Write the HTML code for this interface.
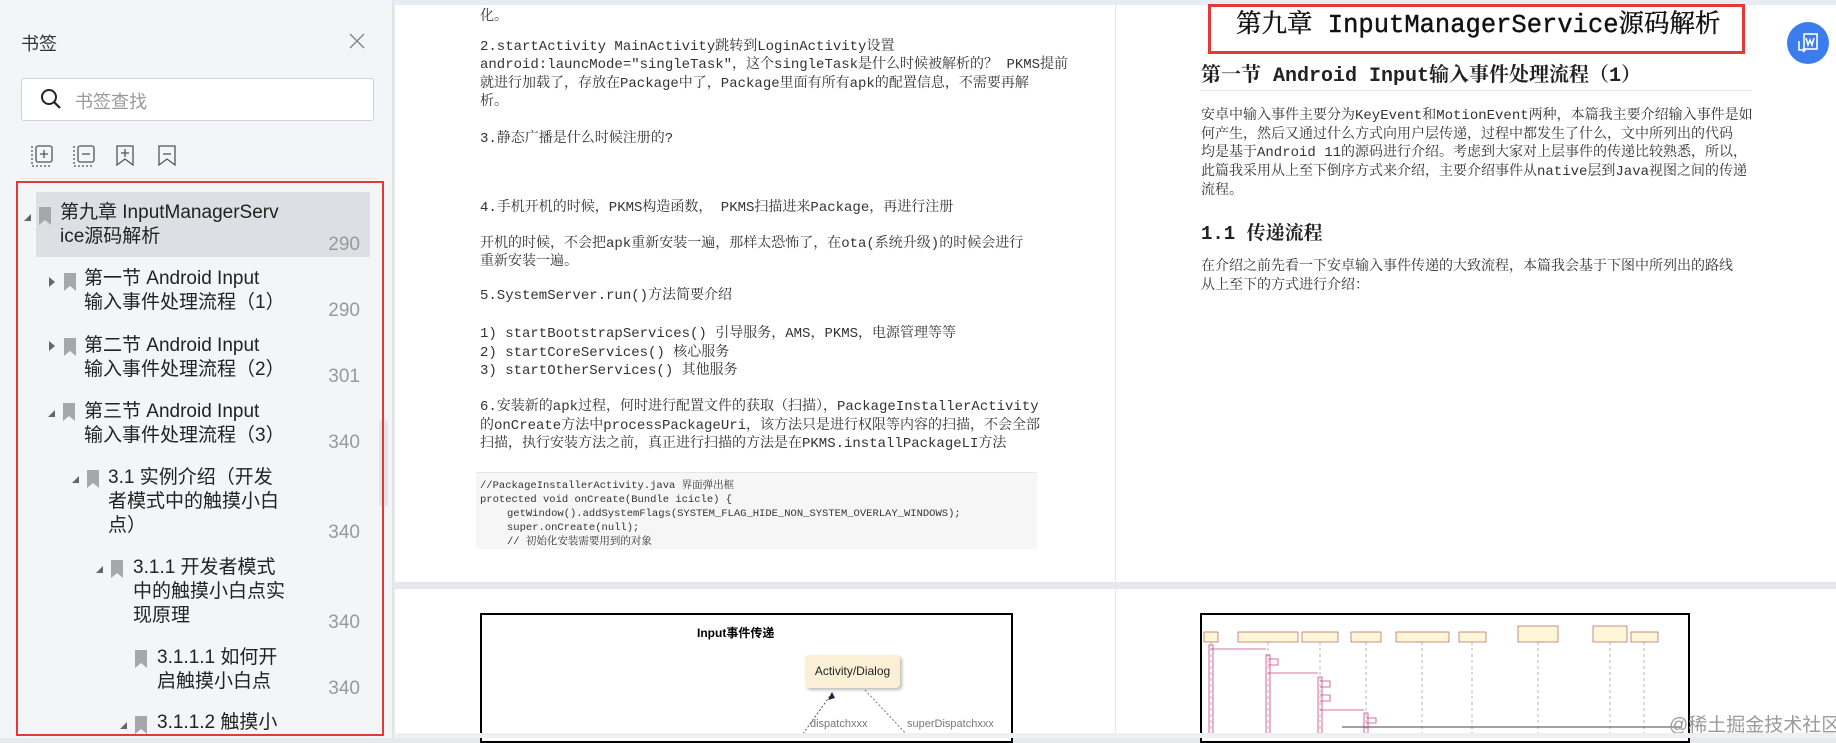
<!DOCTYPE html>
<html><head><meta charset="utf-8"><style>
*{margin:0;padding:0;box-sizing:border-box}
body{width:1836px;height:738px;overflow:hidden;background:#e6e8eb;font-family:"Liberation Sans","Noto Sans CJK SC",sans-serif;position:relative}
.a{position:absolute;white-space:nowrap}
#side{position:absolute;left:0;top:0;width:393px;height:738px;background:#f4f5f7;border-right:1px solid #e0e2e5}
.t{font-size:19px;color:#222;line-height:24px}
.n{font-size:19px;color:#999;width:60px;text-align:right;left:300px}
.ser{font-family:"Liberation Mono","Noto Serif CJK SC",serif;color:#333}
.p{font-size:14px;line-height:18px}
.tri{width:0;height:0;border-left:7px solid transparent;border-bottom:7px solid #666}
.rt{width:0;height:0;border-top:5px solid transparent;border-bottom:5px solid transparent;border-left:6px solid #666}
</style></head><body>
<div id="side">
 <div class="a" style="left:21px;top:30px;font-size:18px;color:#333">书签</div>
 <svg class="a" style="left:349px;top:33px" width="16" height="16"><path d="M1 1L15 15M15 1L1 15" stroke="#888" stroke-width="1.5"/></svg>
 <div class="a" style="left:21px;top:78px;width:353px;height:43px;background:#fff;border:1px solid #cfd2d6;border-radius:3px"></div>
 <svg class="a" style="left:40px;top:88px" width="22" height="22"><circle cx="9" cy="9" r="7" fill="none" stroke="#222" stroke-width="2"/><path d="M14 14L20 20" stroke="#222" stroke-width="2.2"/></svg>
 <div class="a" style="left:75px;top:88px;font-size:18px;color:#999">书签查找</div>
 <svg class="a" style="left:30px;top:144px" width="160" height="24" fill="none" stroke="#555" stroke-width="1.3">
  <path d="M2 2V22H22" stroke-dasharray="2 2"/><rect x="6" y="2" width="16" height="16" rx="2"/><path d="M10 10H18M14 6V14"/>
  <path d="M44 2V22H64" stroke-dasharray="2 2"/><rect x="48" y="2" width="16" height="16" rx="2"/><path d="M52 10H60"/>
  <path d="M87 2H103V21L95 15L87 21Z"/><path d="M91 9H99M95 5V13"/>
  <path d="M129 2H145V21L137 15L129 21Z"/><path d="M133 10H141"/>
 </svg>
 <div class="a" style="left:20px;top:178px;width:355px;height:1px;background:#e2e4e7"></div>
 <div class="a" style="left:36px;top:192px;width:334px;height:65px;background:#dcdfe3"></div>
 <div class="a" style="left:379px;top:420px;width:9px;height:87px;background:#e3e5e8;border-radius:4px"></div>
 <div class="a tri" style="left:24px;top:214px"></div>
 <svg class="a" style="left:39px;top:207px" width="13" height="19"><path d="M0 0H12V18L6 13L0 18Z" fill="#a4a8ad"/></svg>
 <div class="a t" style="left:60px;top:201px">第九章 InputManagerServ<br>ice源码解析</div>
 <div class="a n" style="top:234px">290</div>

 <div class="a rt" style="left:49px;top:277px"></div>
 <svg class="a" style="left:64px;top:273px" width="13" height="19"><path d="M0 0H12V18L6 13L0 18Z" fill="#a4a8ad"/></svg>
 <div class="a t" style="left:84px;top:267px">第一节 Android Input<br>输入事件处理流程（1）</div>
 <div class="a n" style="top:300px">290</div>

 <div class="a rt" style="left:49px;top:341px"></div>
 <svg class="a" style="left:64px;top:338px" width="13" height="19"><path d="M0 0H12V18L6 13L0 18Z" fill="#a4a8ad"/></svg>
 <div class="a t" style="left:84px;top:334px">第二节 Android Input<br>输入事件处理流程（2）</div>
 <div class="a n" style="top:366px">301</div>

 <div class="a tri" style="left:48px;top:410px"></div>
 <svg class="a" style="left:63px;top:403px" width="13" height="19"><path d="M0 0H12V18L6 13L0 18Z" fill="#a4a8ad"/></svg>
 <div class="a t" style="left:84px;top:400px">第三节 Android Input<br>输入事件处理流程（3）</div>
 <div class="a n" style="top:432px">340</div>

 <div class="a tri" style="left:72px;top:476px"></div>
 <svg class="a" style="left:87px;top:470px" width="13" height="19"><path d="M0 0H12V18L6 13L0 18Z" fill="#a4a8ad"/></svg>
 <div class="a t" style="left:108px;top:466px">3.1 实例介绍（开发<br>者模式中的触摸小白<br>点）</div>
 <div class="a n" style="top:522px">340</div>

 <div class="a tri" style="left:96px;top:566px"></div>
 <svg class="a" style="left:111px;top:560px" width="13" height="19"><path d="M0 0H12V18L6 13L0 18Z" fill="#a4a8ad"/></svg>
 <div class="a t" style="left:133px;top:556px">3.1.1 开发者模式<br>中的触摸小白点实<br>现原理</div>
 <div class="a n" style="top:612px">340</div>

 <svg class="a" style="left:135px;top:650px" width="13" height="19"><path d="M0 0H12V18L6 13L0 18Z" fill="#a4a8ad"/></svg>
 <div class="a t" style="left:157px;top:646px">3.1.1.1 如何开<br>启触摸小白点</div>
 <div class="a n" style="top:678px">340</div>

 <div class="a tri" style="left:120px;top:722px"></div>
 <svg class="a" style="left:135px;top:716px" width="13" height="19"><path d="M0 0H12V18L6 13L0 18Z" fill="#a4a8ad"/></svg>
 <div class="a t" style="left:157px;top:711px">3.1.1.2 触摸小</div>
 <div class="a" style="left:16px;top:181px;width:368px;height:555px;border:2px solid #e53935"></div>
</div>

<div class="a" style="left:394px;top:0;width:1442px;height:5px;background:#e8ecf4"></div>
<div class="a" style="left:395px;top:5px;width:720px;height:577px;background:#fff"></div>
<div class="a" style="left:1116px;top:5px;width:720px;height:577px;background:#fff"></div>
<div class="a" style="left:395px;top:589px;width:720px;height:144px;background:#fff"></div>
<div class="a" style="left:1116px;top:589px;width:720px;height:144px;background:#fff"></div>

<div class="ser p">
 <div class="a" style="left:480px;top:8px">化。</div>
 <div class="a" style="left:480px;top:38px">2.startActivity MainActivity跳转到LoginActivity设置</div>
 <div class="a" style="left:480px;top:56px">android:launcMode="singleTask"，这个singleTask是什么时候被解析的？ PKMS提前</div>
 <div class="a" style="left:480px;top:75px">就进行加载了，存放在Package中了，Package里面有所有apk的配置信息，不需要再解</div>
 <div class="a" style="left:480px;top:93px">析。</div>
 <div class="a" style="left:480px;top:130px">3.静态广播是什么时候注册的?</div>
 <div class="a" style="left:480px;top:199px">4.手机开机的时候，PKMS构造函数， PKMS扫描进来Package，再进行注册</div>
 <div class="a" style="left:480px;top:235px">开机的时候，不会把apk重新安装一遍，那样太恐怖了，在ota(系统升级)的时候会进行</div>
 <div class="a" style="left:480px;top:253px">重新安装一遍。</div>
 <div class="a" style="left:480px;top:287px">5.SystemServer.run()方法简要介绍</div>
 <div class="a" style="left:480px;top:325px">1)  startBootstrapServices() 引导服务，AMS，PKMS，电源管理等等</div>
 <div class="a" style="left:480px;top:344px">2)  startCoreServices() 核心服务</div>
 <div class="a" style="left:480px;top:362px">3)  startOtherServices() 其他服务</div>
 <div class="a" style="left:480px;top:398px">6.安装新的apk过程，何时进行配置文件的获取（扫描），PackageInstallerActivity</div>
 <div class="a" style="left:480px;top:417px">的onCreate方法中processPackageUri，该方法只是进行权限等内容的扫描，不会全部</div>
 <div class="a" style="left:480px;top:435px">扫描，执行安装方法之前，真正进行扫描的方法是在PKMS.installPackageLI方法</div>
</div>
<div class="a" style="left:476px;top:472px;width:561px;height:77px;background:#f6f6f6;border-top:1px solid #e6e6e6"></div>
<div class="ser" style="font-size:10.5px;line-height:14px">
 <div class="a" style="left:480px;top:479px">//PackageInstallerActivity.java  界面弹出框</div>
 <div class="a" style="left:480px;top:493px">protected void onCreate(Bundle icicle) {</div>
 <div class="a" style="left:507px;top:507px">getWindow().addSystemFlags(SYSTEM_FLAG_HIDE_NON_SYSTEM_OVERLAY_WINDOWS);</div>
 <div class="a" style="left:507px;top:521px">super.onCreate(null);</div>
 <div class="a" style="left:507px;top:535px">// 初始化安装需要用到的对象</div>
</div>

<div class="a" style="left:1208px;top:4px;width:537px;height:50px;border:3px solid #e53935"></div>
<div class="a ser" style="left:1236px;top:10px;font-size:25.5px;color:#111;line-height:32px;-webkit-text-stroke:0.4px #111">第九章 InputManagerService源码解析</div>
<div class="a ser" style="left:1201px;top:64px;font-size:20px;color:#222;font-weight:bold;line-height:26px">第一节 Android Input输入事件处理流程（1）</div>
<div class="a" style="left:1201px;top:90px;width:551px;height:1px;background:#e4e4e4"></div>
<div class="ser p">
 <div class="a" style="left:1201px;top:107px">安卓中输入事件主要分为KeyEvent和MotionEvent两种，本篇我主要介绍输入事件是如</div>
 <div class="a" style="left:1201px;top:126px">何产生，然后又通过什么方式向用户层传递，过程中都发生了什么，文中所列出的代码</div>
 <div class="a" style="left:1201px;top:144px">均是基于Android 11的源码进行介绍。考虑到大家对上层事件的传递比较熟悉，所以，</div>
 <div class="a" style="left:1201px;top:163px">此篇我采用从上至下倒序方式来介绍，主要介绍事件从native层到Java视图之间的传递</div>
 <div class="a" style="left:1201px;top:182px">流程。</div>
 <div class="a" style="left:1201px;top:258px">在介绍之前先看一下安卓输入事件传递的大致流程，本篇我会基于下图中所列出的路线</div>
 <div class="a" style="left:1201px;top:277px">从上至下的方式进行介绍：</div>
</div>
<div class="a ser" style="left:1201px;top:218px;font-size:19px;font-weight:bold;color:#222">1.1 传递流程</div>
<div class="a" style="left:1787px;top:22px;width:42px;height:42px;border-radius:50%;background:#3b7ded"></div>
<svg class="a" style="left:1796px;top:31px" width="24" height="24" fill="none" stroke="#fff" stroke-width="1.6"><rect x="8" y="3" width="13" height="15"/><path d="M10 7L12 14L14 9L16 14L18 7"/><path d="M3 10V19H9M7 17L9 19L7 21"/></svg>

<div class="a" style="left:480px;top:613px;width:533px;height:130px;border:2px solid #000;background:#fff"></div>
<div class="a" style="left:697px;top:624px;font-size:12px;font-weight:bold;color:#000">Input事件传递</div>
<div class="a" style="left:805px;top:655px;width:95px;height:33px;background:#fbf0d6;border-radius:4px;box-shadow:2px 2px 3px #bbb;font-size:12px;line-height:33px;text-align:center;color:#222">Activity/Dialog</div>
<svg class="a" style="left:780px;top:688px" width="230" height="50"><path d="M52 5L20 50" stroke="#555" stroke-dasharray="2 2"/><path d="M52 4L48 12L55 10Z" fill="#224"/><path d="M85 2L130 50" stroke="#777" stroke-dasharray="2 2"/></svg>
<div class="a" style="left:810px;top:718px;font-size:11px;color:#777">dispatchxxx</div>
<div class="a" style="left:907px;top:718px;font-size:11px;color:#777">superDispatchxxx</div>

<div class="a" style="left:1200px;top:613px;width:490px;height:130px;border:2px solid #000;background:#fff"></div>
<svg class="a" style="left:1202px;top:615px" width="486" height="120">
 <g fill="#fdf7d8" stroke="#a44" stroke-width=".6">
  <rect x="2" y="17" width="14" height="10"/><rect x="36" y="17" width="60" height="10"/><rect x="100" y="17" width="36" height="10"/><rect x="149" y="17" width="30" height="10"/><rect x="194" y="17" width="53" height="10"/><rect x="257" y="17" width="27" height="10"/><rect x="316" y="11" width="40" height="16"/><rect x="391" y="11" width="34" height="16"/><rect x="429" y="17" width="27" height="10"/>
 </g>
 <g stroke="#888" stroke-dasharray="3 3" stroke-width=".6">
  <path d="M9 27V120M66 27V120M118 27V120M164 27V120M220 27V120M270 27V120M336 27V120M408 27V120M442 27V120"/>
 </g>
 <g stroke="#c48" fill="none" stroke-width=".8">
  <path d="M9 34H64M66 44H76V50H66M66 58H116M118 66H128V72H118M118 80H128V86H118M118 95H162M164 103H174V108H164"/>
  <rect x="7" y="30" width="4" height="90"/><rect x="64" y="40" width="4" height="80"/><rect x="116" y="62" width="4" height="58"/><rect x="162" y="98" width="4" height="22"/>
 </g>
 <path d="M140 112H480" stroke="#444"/>
</svg>
<div class="a" style="left:1669px;top:710px;font-size:19px;color:#9a9a9a">@稀土掘金技术社区</div>
<div class="a" style="left:394px;top:733px;width:1442px;height:5px;background:#eef0f2"></div>
</body></html>
